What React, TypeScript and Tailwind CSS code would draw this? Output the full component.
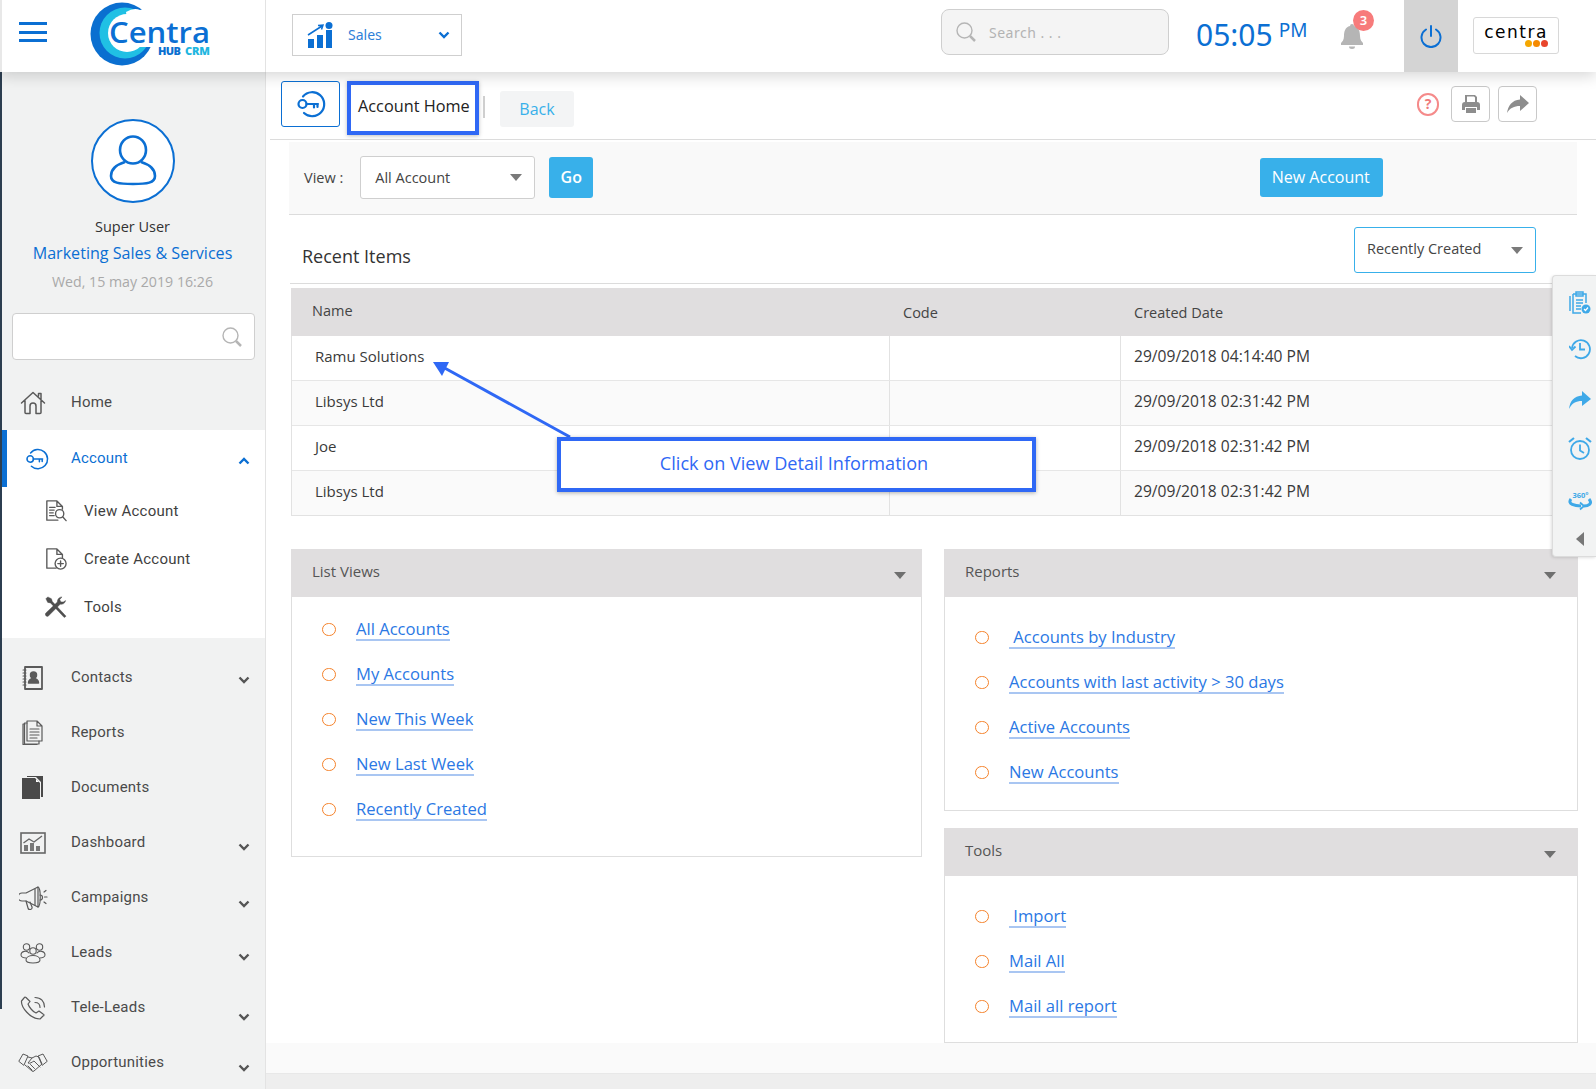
import React from 'react';

const blue = '#0b6fd3';

function Logo() {
  return (
    <svg width="124" height="72" viewBox="0 0 124 72" className="shrink-0">
      <circle cx="32" cy="34" r="31.500" fill="#0a6fd0" />
      <circle cx="35" cy="33" r="25.500" fill="#20c0e4" />
      <circle cx="37" cy="33" r="19" fill="#ffffff" />
      <path d="M36 12 q8 -5 14 -2 q9 -3 13 5 l2 32 h-24z" fill="#fff" />
      <text x="19" y="43" fontFamily="'Open Sans',sans-serif" fontSize="28" fill={blue} fontWeight="600" textLength="101" lengthAdjust="spacingAndGlyphs">Centra</text>
      <text x="68" y="55" fontFamily="'Open Sans',sans-serif" fontSize="11" fontWeight="800" fill="#0a6fd0" textLength="23">HUB</text>
      <text x="95" y="55" fontFamily="'Open Sans',sans-serif" fontSize="11" fontWeight="800" fill="#20b6e0" textLength="25">CRM</text>
    </svg>
  );
}

function KeyIcon({ size = 30, color = blue, sw = 2.2 }: { size?: number; color?: string; sw?: number }) {
  return (
    <svg width={size} height={size} viewBox="0 0 30 30" fill="none" stroke={color} strokeWidth={sw} strokeLinecap="round">
      <path d="M7 7.5 A12 12 0 1 1 8 24" />
      <circle cx="6.5" cy="15" r="4" />
      <path d="M10.5 15 H22 M18 15 v3.5 M21.5 15 v3" />
    </svg>
  );
}

const g = { fill: 'none', stroke: '#5a5a5a', strokeWidth: 1.5, strokeLinejoin: 'round' as const, strokeLinecap: 'round' as const };

const icons: Record<string, React.ReactNode> = {
  home: (
    <svg width="26" height="24" viewBox="0 0 26 24" {...g}>
      <path d="M1.5 12 L13 1.5 L24.5 12 M5 9.5 V21.5 a1 1 0 0 0 1 1 H10 V15 a3 3 0 0 1 6 0 V22.5 H20 a1 1 0 0 0 1 -1 V9.5 M18.5 5 V2.5 H21 V8" />
    </svg>
  ),
  viewdoc: (
    <svg width="22" height="22" viewBox="0 0 24 24" {...g}>
      <path d="M13 1 H2 V22 H14 M13 1 L19 7 V10 M13 1 V7 H19" />
      <path d="M5 8 H11 M5 11 H10 M5 14 H9 M5 17 H10" />
      <circle cx="16" cy="15" r="4.5" />
      <path d="M19.5 18.5 L23 22.5" />
    </svg>
  ),
  createdoc: (
    <svg width="22" height="22" viewBox="0 0 24 24" {...g}>
      <path d="M13 1 H2 V22 H12 M13 1 L19 7 V11 M13 1 V7 H19" />
      <circle cx="17" cy="17" r="6" />
      <path d="M17 14 V20 M14 17 H20" />
    </svg>
  ),
  tools: (
    <svg width="22" height="22" viewBox="0 0 24 24" fill="#4f4f4f" stroke="#4f4f4f" strokeWidth="0.5">
      <path d="M1 3 L3 1 L7 3 L8 6 L21 20 L23 22 L21 23.5 L6 7.5 L3 7z" />
      <path d="M22.5 5 A5 5 0 0 1 16.5 9 L4 21.5 a2 2 0 0 1 -3 -3 L13.5 6.5 A5 5 0 0 1 18.5 1 L16 4 L17.5 6.5 L20 6.5z" />
    </svg>
  ),
  contacts: (
    <svg width="22" height="24" viewBox="0 0 22 24" {...g}>
      <path d="M3 1 H20 V23 H3 M3 1 V23" strokeWidth="1.8" />
      <path d="M1 4 H4 M1 7 H4 M1 10 H4 M1 13 H4 M1 16 H4 M1 19 H4" strokeWidth="1.1" />
      <circle cx="11.5" cy="9" r="3" fill="#5a5a5a" />
      <path d="M6.5 17 c0 -6 10 -6 10 0z" fill="#5a5a5a" />
    </svg>
  ),
  reports: (
    <svg width="22" height="25" viewBox="0 0 22 25" {...g} strokeWidth="1.2">
      <path d="M5 1 H15 L20 6 V21 H5z M15 1 V6 H20" />
      <path d="M5 3 H2.5 V24 H17 V21 M3 4 H1 V24.5 H15" />
      <path d="M8 9 H17 M8 12 H17 M8 15 H17 M8 18 H15" />
    </svg>
  ),
  documents: (
    <svg width="22" height="24" viewBox="0 0 22 24">
      <path d="M0 2 H13 L18 7 V23 H0z" fill="#4a4a4a" />
      <path d="M5 0 H21 V21 H19 V6 L14 1 H5z" fill="#4a4a4a" />
      <path d="M14 3 L17 6 H14z" fill="#fff" />
    </svg>
  ),
  dashboard: (
    <svg width="26" height="22" viewBox="0 0 26 22" fill="none" stroke="#666" strokeWidth="1.4">
      <rect x="1" y="1" width="24" height="20" strokeWidth="1.6" />
      <path d="M4 19 V13 H8 V19z M10 19 V11 H14 V19z M16 19 V14 H20 V19z" fill="#777" stroke="none" />
      <path d="M3.5 11 L9 7 L14 10 L22 4" />
    </svg>
  ),
  campaigns: (
    <svg width="29" height="24" viewBox="0 0 29 24" {...g} strokeWidth="1.2">
      <path d="M19 1 L7 7 H3 a4 4 0 0 0 0 8 H7 L19 21z" />
      <path d="M16 3 V19 M19 1 c3 1 3 19 0 20" />
      <path d="M7 15 L9 22 a2 2 0 0 0 4 -1 L11 16" />
      <path d="M21 9 a2.5 2.5 0 0 1 0 5 M25 6 L27 4.5 M25.5 11 H28 M25 16 L27 17.5" />
    </svg>
  ),
  leads: (
    <svg width="26" height="22" viewBox="0 0 26 22" {...g} strokeWidth="1.1">
      <circle cx="6.5" cy="5" r="3.2" />
      <circle cx="19.5" cy="5" r="3.2" />
      <path d="M9 11 c-2 -3 -8 -2 -8 2 c0 2 3 3 5 3 M17 11 c2 -3 8 -2 8 2 c0 2 -3 3 -5 3" />
      <circle cx="13" cy="9" r="3.2" />
      <path d="M6 18 c0 -6 14 -6 14 0 c0 4 -14 4 -14 0z" />
    </svg>
  ),
  tele: (
    <svg width="26" height="24" viewBox="0 0 26 24" {...g} strokeWidth="1.2">
      <path d="M4 2 L1.5 5 C1 11 10 23 20 23 L23 20 a1 1 0 0 0 0 -2 L19 15 L16 17 C13 16 9 11 8 8 L10 5.5 L6 1.5 a1.5 1.5 0 0 0 -2 .5z" />
      <path d="M15 6.5 c3 0 5 2 5 5 M15 1.5 c6 0 9.5 4 9.5 9.5" />
    </svg>
  ),
  opp: (
    <svg width="30" height="20" viewBox="0 0 30 20" {...g} strokeWidth="1">
      <path d="M1 8 L5 1 L10 3 L6 12z M29 8 L25 1 L20 3 L24 12z" />
      <path d="M10 4 L14 5 L18 3 L21 4 L24 11 L16 18 a1.5 1.5 0 0 1 -2 0 L7 12" />
      <path d="M14 5 L10 10 C12 11 14 9 16 8 L22 14 M10 13 l4 4 M12.500 11.500 l4 4" />
    </svg>
  ),
};

function Chevron({ up = false, color = '#555' }: { up?: boolean; color?: string }) {
  return (
    <svg width="12" height="8" viewBox="0 0 12 8" fill="none" stroke={color} strokeWidth="2.4" className={up ? 'rotate-180' : ''}>
      <path d="M1.500 1.500 L6 6 L10.500 1.500" />
    </svg>
  );
}

function NavItem({ icon, label, chevron }: { icon: string; label: string; chevron?: number }) {
  return (
    <div className="flex h-[55px] items-center text-[15px] text-[#4a4a4a]">
      <div className="flex w-[71px] justify-center pr-[5px]">{icons[icon]}</div>
      <span className="flex-1 tracking-[0.2px]">{label}</span>
      {chevron !== undefined && (
        <span className="mr-[15px]" style={{ marginTop: chevron }}>
          <Chevron />
        </span>
      )}
    </div>
  );
}

function SubItem({ icon, label }: { icon: string; label: string }) {
  return (
    <div className="flex h-[48px] items-center text-[15px] text-[#3f3f3f]">
      <div className="flex w-[84px] shrink-0 justify-start pl-[45px]">{icons[icon]}</div>
      <span className="tracking-[0.25px]">{label}</span>
    </div>
  );
}

function Sidebar() {
  return (
    <aside className="relative flex w-[266px] shrink-0 flex-col overflow-hidden border-r border-[#e3e3e3] bg-[#f1f2f2] font-['Roboto',sans-serif]">
      <div className="absolute top-0 left-0 h-[937px] w-[2px] bg-[#2c3e50]" />
      <div className="flex shrink-0 flex-col items-center pt-[47px]">
        <div className="flex h-[84px] w-[84px] items-center justify-center rounded-full border-2 border-[#0b6fd3] bg-white">
          <svg width="48" height="52" viewBox="0 0 48 52" fill="none" stroke={blue} strokeWidth="2.6">
            <ellipse cx="24" cy="15" rx="13" ry="13.500" />
            <path d="M16 27 C6 30 2 35 2 41 C2 48 10 49 24 49 C38 49 46 48 46 41 C46 35 42 30 32 27" />
          </svg>
        </div>
        <div className="mt-[14px] font-['Open_Sans',sans-serif] text-[14.500px] leading-[20px] text-[#333]">Super User</div>
        <div className="mt-[6px] font-['Open_Sans',sans-serif] text-[16.100px] leading-[20px] text-[#0b6fd3]">Marketing Sales &amp; Services</div>
        <div className="mt-[9px] font-['Open_Sans',sans-serif] text-[14.200px] leading-[20px] text-[#a9a9a9]">Wed, 15 may 2019 16:26</div>
      </div>
      <div className="mt-[21px] mr-[10px] ml-[12px] flex h-[47px] shrink-0 items-center justify-end rounded-[4px] border border-[#cfcfcf] bg-white pr-[11px]">
        <svg width="22" height="22" viewBox="0 0 22 22" fill="none" stroke="#b5b5b5" strokeWidth="1.400">
          <circle cx="9.500" cy="9.500" r="7.500" />
          <path d="M15 15 L20 20" strokeWidth="2.500" />
        </svg>
      </div>
      <div className="mt-[15px] shrink-0">
        <NavItem icon="home" label="Home" />
      </div>
      <div className="h-[208px] shrink-0 bg-white">
        <div className="flex h-[57px] items-center text-[15px] text-[#0b6fd3]">
          <div className="ml-[1px] h-full w-[6px] bg-[#0b6fd3]" />
          <div className="flex w-[64px] justify-center pr-[5px]">
            <KeyIcon size={24} sw={1.900} />
          </div>
          <span className="flex-1 tracking-[0.2px]">Account</span>
          <span className="mt-[4px] mr-[15px]">
            <Chevron up color="#0b6fd3" />
          </span>
        </div>
        <SubItem icon="viewdoc" label="View Account" />
        <SubItem icon="createdoc" label="Create Account" />
        <SubItem icon="tools" label="Tools" />
      </div>
      <div className="shrink-0 pt-[12px]">
        <NavItem icon="contacts" label="Contacts" chevron={5} />
        <NavItem icon="reports" label="Reports" />
        <NavItem icon="documents" label="Documents" />
        <NavItem icon="dashboard" label="Dashboard" chevron={8} />
        <NavItem icon="campaigns" label="Campaigns" chevron={13} />
        <NavItem icon="leads" label="Leads" chevron={8} />
        <NavItem icon="tele" label="Tele-Leads" chevron={18} />
        <NavItem icon="opp" label="Opportunities" chevron={10} />
      </div>
    </aside>
  );
}

function TopBar() {
  return (
    <header className="relative z-20 flex h-[72px] shrink-0 items-center bg-white shadow-[0_4px_14px_rgba(0,0,0,0.16)]">
      <div className="flex h-full w-[266px] shrink-0 items-center border-r border-l-2 border-[#e3e3e3] border-l-[#e8e8e8] pl-[17px]">
        <div className="mb-[8px] flex h-[20px] w-[28px] flex-col justify-between">
          <div className="h-[3px] bg-[#0b6fd3]" />
          <div className="h-[3px] bg-[#0b6fd3]" />
          <div className="h-[3px] bg-[#0b6fd3]" />
        </div>
        <div className="ml-[43px]">
          <Logo />
        </div>
      </div>
      <div className="mb-[2px] ml-[26px] flex h-[42px] w-[170px] items-center border border-[#cfcfcf] pl-[14px]">
        <svg width="26" height="26" viewBox="0 0 26 26" fill={blue}>
          <rect x="1" y="17" width="6" height="9" />
          <rect x="10" y="13" width="6" height="13" />
          <rect x="19" y="8" width="6" height="18" />
          <path d="M1 13 L15 4 M11 3.500 L16 3 L14.500 7.500" fill="none" stroke={blue} strokeWidth="1.500" />
          <circle cx="22" cy="3.500" r="3.500" />
        </svg>
        <span className="ml-[15px] flex-1 pb-[2px] text-[14px] text-[#2f7fd8]">Sales</span>
        <span className="mr-[11px]">
          <Chevron color={blue} />
        </span>
      </div>
      <div className="mb-[8px] ml-[479px] flex h-[46px] w-[228px] items-center rounded-[8px] border border-[#cfcfcf] bg-[#f4f4f4] pl-[13px]">
        <svg width="22" height="22" viewBox="0 0 22 22" fill="none" stroke="#b5b5b5" strokeWidth="1.400">
          <circle cx="9.500" cy="9.500" r="7.500" />
          <path d="M15 15 L20 20" strokeWidth="2.500" />
        </svg>
        <span className="ml-[12px] text-[14px] tracking-[0.5px] text-[#b3b3b3]">Search . . .</span>
      </div>
      <div className="mb-[2px] ml-[27px] flex w-[112px] items-start text-[#0b6fd3]">
        <span className="text-[30px] leading-[40px]">05:05</span>
        <span className="ml-[6px] text-[19px] leading-[30px]">PM</span>
      </div>
      <div className="relative mb-[8px] ml-[32px] w-[38px]">
        <svg width="24" height="26" viewBox="0 0 24 26" fill="#b5b5b5" className="mt-[8px]">
          <path d="M12 1 a2 2 0 0 1 2 2 C19 4 20 9 20 13 C20 17 22 19 23 20 V22 H1 V20 C2 19 4 17 4 13 C4 9 5 4 10 3 a2 2 0 0 1 2 -2z" />
          <path d="M9 23.500 h6 a3 2.500 0 0 1 -6 0z" />
        </svg>
        <span className="absolute -top-[5px] left-[13px] flex h-[21px] w-[21px] items-center justify-center rounded-full bg-[#f77b7b] text-[13px] font-semibold text-white">3</span>
      </div>
      <div className="ml-[26px] flex h-full w-[54px] items-center justify-center bg-[#d4d4d4]">
        <svg width="22" height="24" viewBox="0 0 22 24" fill="none" stroke={blue} strokeWidth="2" strokeLinecap="round">
          <path d="M11 2 V12" />
          <path d="M6 5.500 A9.500 9.500 0 1 0 16 5.500" />
        </svg>
      </div>
      <div className="mb-[1px] ml-[15px] flex h-[37px] w-[86px] flex-col items-center justify-center rounded-[3px] border border-[#d8d8d8] leading-none">
        <span className="font-['DejaVu_Sans',sans-serif] text-[17px] leading-[15px] tracking-[1.500px] text-black">centra</span>
        <span className="ml-[40px] flex gap-[1px]">
          <i className="h-[7px] w-[7px] rounded-full bg-[#f5a700]" />
          <i className="h-[7px] w-[7px] rounded-full bg-[#f58a00]" />
          <i className="h-[7px] w-[7px] rounded-full bg-[#e8452c]" />
        </span>
      </div>
    </header>
  );
}

function Caret({ color = '#7a7a7a' }: { color?: string }) {
  return <div className="h-0 w-0 border-x-[6px] border-t-[7px] border-x-transparent" style={{ borderTopColor: color }} />;
}

function PageLink({ children }: { children: React.ReactNode }) {
  return (
    <div className="flex h-[45px] items-center">
      <span className="h-[13px] w-[14px] rounded-full border-[1.500px] border-[#f5822a]" />
      <span className="ml-[20px] border-b-2 border-[#a9c6f2] text-[16.600px] leading-[21px] text-[#2b78e4]">{children}</span>
    </div>
  );
}

function Card({ title, links, pt, pb, caretPr }: { title: string; links: string[]; pt: number; pb: number; caretPr: number }) {
  return (
    <section className="border border-[#dedede]">
      <div className="-m-px flex h-[48px] items-start justify-between rounded-t-[2px] bg-[#e0dedf] pt-[11px] pl-[21px]" style={{ paddingRight: caretPr }}>
        <span className="text-[15px] leading-[22px] text-[#555]">{title}</span>
        <span className="mt-[12px]">
          <Caret color="#6f6f6f" />
        </span>
      </div>
      <div className="pl-[30px]" style={{ paddingTop: pt, paddingBottom: pb }}>
        {links.map((l) => (
          <PageLink key={l}>{l}</PageLink>
        ))}
      </div>
    </section>
  );
}

const rows = [
  ['Ramu Solutions', '29/09/2018 04:14:40 PM', 'bg-white h-[44px]'],
  ['Libsys Ltd', '29/09/2018 02:31:42 PM', 'bg-[#fafafa] h-[45px]'],
  ['Joe', '29/09/2018 02:31:42 PM', 'bg-white h-[45px]'],
  ['Libsys Ltd', '29/09/2018 02:31:42 PM', 'bg-[#fafafa] h-[45px]'],
];

function Main() {
  return (
    <main className="relative flex min-w-0 flex-1 flex-col bg-white font-['Open_Sans',sans-serif]">
      <div className="ml-[4px] flex h-[68px] shrink-0 items-start border-b border-[#dcdcdc] pl-[11px]">
        <div className="mt-[9px] flex h-[46px] w-[59px] items-center justify-center rounded-[3px] border border-[#0b6fd3]">
          <KeyIcon size={30} />
        </div>
        <div className="mt-[9px] ml-[7px] h-[54px] w-[132px] border-4 border-[#2f68f5] pt-[10px] pl-[7px] text-[16.300px] leading-[22px] whitespace-nowrap text-[#222] shadow-[0_1px_4px_rgba(0,0,0,0.25)]">
          Account Home
        </div>
        <div className="mt-[24px] ml-[4px] h-[22px] w-[2px] bg-[#cfcfcf]" />
        <div className="mt-[19px] ml-[15px] flex h-[36px] w-[74px] items-center justify-center rounded-[3px] bg-[#f3f4f5] text-[16px] text-[#38b0ea]">Back</div>
        <div className="mt-[14px] mr-[59px] ml-auto flex items-center">
          <div className="mr-[12px] flex h-[23px] w-[22px] items-center justify-center rounded-full border-2 border-[#f58a8a] text-[14px] leading-none font-bold text-[#f07a7a]">?</div>
          <div className="flex h-[36px] w-[39px] items-center justify-center rounded-[4px] border border-[#c9c9c9]">
            <svg width="20" height="20" viewBox="0 0 20 20" fill="#8d8d8d">
              <path d="M4 1 H14 L16 3 V8 H14 V3.500 L13 2.500 H6 V8 H4z" />
              <path d="M1 11 a3 3 0 0 1 3 -3 H16 a3 3 0 0 1 3 3 V16 H16 V13 H4 V16 H1z" />
              <path d="M5 14 H15 V19 H5z" />
            </svg>
          </div>
          <div className="ml-[8px] flex h-[36px] w-[39px] items-center justify-center rounded-[4px] border border-[#c9c9c9]">
            <svg width="24" height="20" viewBox="0 0 24 20" fill="#8d8d8d">
              <path d="M14 1 L23 9 L14 17 V12 C8 12 4 14 1 19 C2 12 6 6 14 5.500z" />
            </svg>
          </div>
        </div>
      </div>

      <div className="mt-[2px] mr-[19px] ml-[23px] flex h-[73px] shrink-0 items-center border-b border-[#dcdcdc] bg-[#f9f9f9] pb-[2px] pl-[15px]">
        <span className="pt-[1px] text-[14.500px] text-[#444]">View :</span>
        <div className="ml-[17px] flex h-[43px] w-[175px] items-center justify-between rounded-[3px] border border-[#cfcfcf] bg-white pt-[1px] pr-[12px] pl-[14px] text-[14.500px] text-[#444]">
          All Account
          <Caret />
        </div>
        <div className="ml-[14px] flex h-[41px] w-[44px] items-center justify-center rounded-[3px] bg-[#38b0ea] text-[16px] font-semibold text-white">Go</div>
        <div className="ml-[667px] flex h-[39px] w-[123px] items-center justify-center rounded-[3px] bg-[#38b0ea] pr-[2px] text-[16px] text-white">New Account</div>
      </div>

      <div className="mr-[44px] ml-[24px] flex h-[69px] shrink-0 items-start justify-between border-b border-[#dcdcdc] pl-[12px]">
        <span className="mt-[28px] text-[18px] leading-[26px] text-[#333]">Recent Items</span>
        <div className="mt-[12px] mr-[16px] flex h-[46px] w-[182px] items-center justify-between rounded-[3px] border border-[#38b0ea] bg-white pr-[12px] pb-[3px] pl-[12px] text-[14.500px] text-[#444]">
          Recently Created
          <span className="mt-[4px]">
            <Caret />
          </span>
        </div>
      </div>

      <div className="mt-[4px] mr-[18px] ml-[25px] shrink-0 border-x border-b border-[#e2e2e2] text-[15px] text-[#3a3a3a]">
        <div className="-mx-px flex h-[48px] bg-[#e0dedf] text-[14.500px] text-[#444]">
          <div className="w-[597px] pt-[12px] pl-[21px] leading-[22px]">Name</div>
          <div className="w-[232px] pt-[14px] pl-[15px] leading-[22px]">Code</div>
          <div className="flex-1 pt-[14px] pl-[14px] leading-[22px]">Created Date</div>
        </div>
        {rows.map((r, i) => (
          <div key={i} className={`flex items-center ${i > 0 ? 'border-t border-[#e6e6e6]' : ''} ${r[2]}`}>
            <div className="flex h-full w-[597px] items-center pb-[4px] pl-[23px]">{r[0]}</div>
            <div className="h-full w-[232px] border-x border-[#e2e2e2]" />
            <div className="flex h-full flex-1 items-center pb-[3px] pl-[13px] text-[15.600px]">{r[1]}</div>
          </div>
        ))}
      </div>

      <div className="mt-[33px] mr-[19px] ml-[25px] grid shrink-0 grid-cols-[631px_634px] items-start gap-x-[22px]">
        <Card title="List Views" pt={11} pb={24} caretPr={16} links={['All Accounts', 'My Accounts', 'New This Week', 'New Last Week', 'Recently Created']} />
        <div className="flex flex-col gap-[17px]">
          <Card title="Reports" pt={19} pb={15} caretPr={22} links={['\u00a0Accounts by Industry', 'Accounts with last activity > 30 days', 'Active Accounts', 'New Accounts']} />
          <Card title="Tools" pt={19} pb={13} caretPr={22} links={['\u00a0Import', 'Mail All', 'Mail all report']} />
        </div>
      </div>

      <div className="h-[30px] shrink-0 bg-[#fafafa]" />
      <div className="flex-1 border-t border-[#e8e8e8] bg-[#eeeeee]" />

      <div className="absolute top-[289px] left-[167px] z-10">
        <svg width="140" height="80" viewBox="0 0 140 80" className="block">
          <path d="M137 76 L8 5" stroke="#2f68f5" strokeWidth="3" />
          <path d="M0 1 L16 1 L9 15z" fill="#2f68f5" />
        </svg>
      </div>
      <div className="absolute top-[365px] left-[291px] z-10 flex h-[55px] w-[479px] items-center justify-center border-4 border-[#2f68f5] bg-white pr-[5px] pb-[1px] text-[18.100px] font-medium text-[#2f68f5] shadow-[0_1px_4px_rgba(0,0,0,0.3)]">
        Click on View Detail Information
      </div>

      <div className="absolute top-[203px] right-0 z-10 flex h-[282px] w-[44px] flex-col items-center rounded-l-[4px] border border-r-0 border-[#dcdcdc] bg-[#f2f3f3] pt-[15px] pl-[10px] shadow-[-1px_1px_3px_rgba(0,0,0,0.12)]">
        <svg width="22" height="24" viewBox="0 0 22 24" fill="none" stroke="#3fa9e8" strokeWidth="1.500">
          <path d="M4 3 H17 V12 M4 3 V22 H12 M1 5 V20 M7 1 H14 V5 H7z" />
          <path d="M7 9 H14 M7 12 H14 M7 15 H12 M7 18 H12" />
          <circle cx="17" cy="18" r="4.500" fill="#3fa9e8" stroke="none" />
          <path d="M15 18 L16.500 19.500 L19 16.500" stroke="#fff" strokeWidth="1.200" />
        </svg>
        <svg width="22" height="22" viewBox="0 0 22 22" fill="none" stroke="#3fa9e8" strokeWidth="1.800" className="mt-[23px]">
          <path d="M3 10 A9 9 0 1 1 6 18" />
          <path d="M0 8 L3 12 L6.500 8.500" />
          <path d="M11 5 V11.500 H16" />
        </svg>
        <svg width="24" height="18" viewBox="0 0 24 18" fill="#3fa9e8" className="mt-[31px]">
          <path d="M14 0 L23 8 L14 15 V10 C8 10 4 12 1 18 C2 10 6 5 14 4.500z" />
        </svg>
        <svg width="24" height="24" viewBox="0 0 24 24" fill="none" stroke="#3fa9e8" strokeWidth="1.800" className="mt-[28px]">
          <circle cx="12" cy="13" r="9" />
          <path d="M12 7.500 V13.500 L16 16" />
          <path d="M1 5 L6 1 M23 5 L18 1" strokeWidth="2.200" />
        </svg>
        <svg width="24" height="20" viewBox="0 0 24 20" fill="none" stroke="#3fa9e8" strokeWidth="3" className="mt-[30px]">
          <text x="4.500" y="7" fontSize="7.500" fontWeight="700" fill="#3fa9e8" stroke="none" fontFamily="'Open Sans',sans-serif">360°</text>
          <path d="M3 8 C-1 13 7 15 13 15 M21 8 C25 13 20 15 16 15" />
          <path d="M12 11.500 L16 15 L12 18.500" strokeWidth="1.800" />
        </svg>
        <div className="mt-[21px] h-0 w-0 border-y-[7px] border-r-[8px] border-y-transparent border-r-[#777]" />
      </div>
    </main>
  );
}

export default function App() {
  return (
    <div className="flex h-screen w-full flex-col overflow-hidden bg-white">
      <TopBar />
      <div className="flex min-h-0 flex-1">
        <Sidebar />
        <Main />
      </div>
    </div>
  );
}
